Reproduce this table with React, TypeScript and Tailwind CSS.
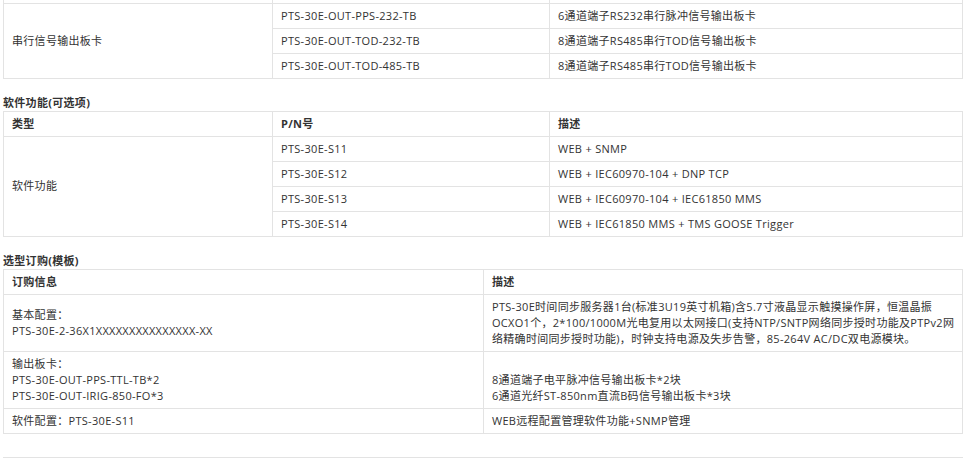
import React from 'react';

const cell = 'border border-[#e3e3e3] px-2 py-1 align-middle';

const serialRows = [
  ['PTS-30E-OUT-PPS-232-TB', '6通道端子RS232串行脉冲信号输出板卡'],
  ['PTS-30E-OUT-TOD-232-TB', '8通道端子RS485串行TOD信号输出板卡'],
  ['PTS-30E-OUT-TOD-485-TB', '8通道端子RS485串行TOD信号输出板卡'],
];

const softRows = [
  ['PTS-30E-S11', 'WEB + SNMP'],
  ['PTS-30E-S12', 'WEB + IEC60970-104 + DNP TCP'],
  ['PTS-30E-S13', 'WEB + IEC60970-104 + IEC61850 MMS'],
  ['PTS-30E-S14', 'WEB + IEC61850 MMS + TMS GOOSE Trigger'],
];

// each line gets a fixed 16px box so mixed latin/cjk fonts don't grow the row
function Lines({ lines }: { lines: string[] }) {
  return (
    <>
      {lines.map((l, i) => (
        <div key={i} className="h-4 whitespace-nowrap">
          {l}
        </div>
      ))}
    </>
  );
}

function Heading({ children }: { children: React.ReactNode }) {
  return <div className="mt-4 h-4 font-bold whitespace-nowrap">{children}</div>;
}

export default function App() {
  return (
    <div
      className="w-[967px] h-[469px] overflow-hidden bg-white text-[#333] text-[11px] leading-4 tracking-[0.3px] pl-[3px]"
      style={{ fontFamily: '"Open Sans", "Noto Sans CJK SC", sans-serif' }}
    >
      <div className="w-[960px]">
        {/* serial output cards (tail of previous table) */}
        <table className="w-full border-collapse table-fixed">
          <colgroup>
            <col className="w-[269px]" />
            <col className="w-[277px]" />
            <col />
          </colgroup>
          <tbody>
            <tr className="h-[3px]">
              <td className="border-x border-[#e3e3e3] p-0" />
              <td className="border-x border-[#e3e3e3] p-0" />
              <td className="border-x border-[#e3e3e3] p-0" />
            </tr>
            {serialRows.map(([pn, desc], i) => (
              <tr key={pn}>
                {i === 0 && (
                  <td rowSpan={3} className={cell}>
                    <Lines lines={['串行信号输出板卡']} />
                  </td>
                )}
                <td className={cell}>
                  <Lines lines={[pn]} />
                </td>
                <td className={cell}>
                  <Lines lines={[desc]} />
                </td>
              </tr>
            ))}
          </tbody>
        </table>

        <Heading>软件功能(可选项)</Heading>
        <table className="w-full border-collapse table-fixed">
          <colgroup>
            <col className="w-[269px]" />
            <col className="w-[277px]" />
            <col />
          </colgroup>
          <tbody>
            <tr className="font-bold">
              <td className={cell}>
                <Lines lines={['类型']} />
              </td>
              <td className={cell}>
                <Lines lines={['P/N号']} />
              </td>
              <td className={cell}>
                <Lines lines={['描述']} />
              </td>
            </tr>
            {softRows.map(([pn, desc], i) => (
              <tr key={pn}>
                {i === 0 && (
                  <td rowSpan={4} className={cell}>
                    <Lines lines={['软件功能']} />
                  </td>
                )}
                <td className={cell}>
                  <Lines lines={[pn]} />
                </td>
                <td className={cell}>
                  <Lines lines={[desc]} />
                </td>
              </tr>
            ))}
          </tbody>
        </table>

        <Heading>选型订购(模板)</Heading>
        <table className="w-full border-collapse table-fixed">
          <colgroup>
            <col className="w-[480px]" />
            <col />
          </colgroup>
          <tbody>
            <tr className="font-bold">
              <td className={cell}>
                <Lines lines={['订购信息']} />
              </td>
              <td className={cell}>
                <Lines lines={['描述']} />
              </td>
            </tr>
            <tr>
              <td className={cell}>
                <Lines lines={['基本配置：', 'PTS-30E-2-36X1XXXXXXXXXXXXXXX-XX']} />
              </td>
              <td className={cell}>
                <Lines
                  lines={[
                    'PTS-30E时间同步服务器1台(标准3U19英寸机箱)含5.7寸液晶显示触摸操作屏，恒温晶振',
                    'OCXO1个，2*100/1000M光电复用以太网接口(支持NTP/SNTP网络同步授时功能及PTPv2网',
                    '络精确时间同步授时功能)，时钟支持电源及失步告警，85-264V AC/DC双电源模块。',
                  ]}
                />
              </td>
            </tr>
            <tr>
              <td className={cell}>
                <Lines lines={['输出板卡：', 'PTS-30E-OUT-PPS-TTL-TB*2', 'PTS-30E-OUT-IRIG-850-FO*3']} />
              </td>
              <td className={cell}>
                <Lines lines={['', '8通道端子电平脉冲信号输出板卡*2块', '6通道光纤ST-850nm直流B码信号输出板卡*3块']} />
              </td>
            </tr>
            <tr>
              <td className={cell}>
                <Lines lines={['软件配置：PTS-30E-S11']} />
              </td>
              <td className={cell}>
                <Lines lines={['WEB远程配置管理软件功能+SNMP管理']} />
              </td>
            </tr>
          </tbody>
        </table>

        <div className="mt-[23px] border-t border-[#e3e3e3]" />
      </div>
    </div>
  );
}
